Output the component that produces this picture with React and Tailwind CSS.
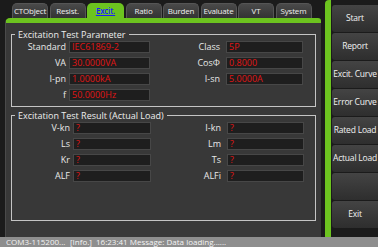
import React from 'react';

const tabs = ['CTObject', 'Resist.', 'Excit.', 'Ratio', 'Burden', 'Evaluate', 'VT', 'System'];
const sideButtons = ['Start', 'Report', 'Excit. Curve', 'Error Curve', 'Rated Load', 'Actual Load', '', 'Exit'];

const paramRows = [
  ['Standard', 'IEC61869-2', 'Class', '5P'],
  ['VA', '30.0000VA', 'CosΦ', '0.8000'],
  ['I-pn', '1.0000kA', 'I-sn', '5.0000A'],
  ['f', '50.0000Hz', null, null],
];

const resultRows = [
  ['V-kn', '?', 'I-kn', '?'],
  ['Ls', '?', 'Lm', '?'],
  ['Kr', '?', 'Ts', '?'],
  ['ALF', '?', 'ALFi', '?'],
];

const Field = ({ value, width }) => (
  <div
    className="h-[12px] bg-[#1e1e1e] border border-[#474747] text-[#e01515] pl-[2px] leading-[10px]"
    style={{ width }}
  >
    {value}
  </div>
);

const GroupBox = ({ title, rows, leftLabel, leftInput, height }) => (
  <fieldset
    className="border border-[#c4c4c4] mx-[5px] px-0 pt-[1px]"
    style={{ height }}
  >
    <legend className="ml-[3px] px-[3px] text-[#eeeeee] leading-[11px]">{title}</legend>
    <div className="flex flex-col gap-[4px]">
      {rows.map(([l1, v1, l2, v2]) => (
        <div key={l1} className="flex items-center h-[12px]">
          <div className="text-right text-[#e8e8e8] pr-[3px]" style={{ width: leftLabel }}>{l1}</div>
          <Field value={v1} width={leftInput} />
          {l2 && (
            <>
              <div className="w-[76px] text-right text-[#e8e8e8] pr-[6px]">{l2}</div>
              <Field value={v2} width={77} />
            </>
          )}
        </div>
      ))}
    </div>
  </fieldset>
);

export default function App() {
  return (
    <div
      className="w-[378px] h-[247px] bg-[#1b1b1b] flex flex-col overflow-hidden text-[9px]"
      style={{ fontFamily: '"Open Sans", "Liberation Sans", sans-serif' }}
    >
      <div className="flex h-[237px]">
        {/* left: tabs + page */}
        <div className="w-[321px] flex flex-col">
          <div className="flex gap-[1.5px] pl-[12px] pt-[3px] h-[18px] text-[8px] tracking-[-0.2px]">
            {tabs.map((t) => (
              <div
                key={t}
                className={
                  t === 'Excit.'
                    ? 'w-[37px] h-[15px] rounded-t-[5px] bg-[#6cc31f] text-[#1a1aff] underline font-semibold flex items-center justify-center whitespace-nowrap'
                    : 'w-[36px] h-[15px] rounded-t-[5px] bg-gradient-to-b from-[#4a4a4a] to-[#333333] border-t border-x border-[#555555] text-[#eeeeee] flex items-center justify-center whitespace-nowrap'
                }
              >
                {t}
              </div>
            ))}
          </div>
          <div className="ml-[5px] flex-1 flex flex-col rounded-tl-[5px] rounded-tr-[3px] border-t-[5px] border-[#6cc31f] bg-[#383838] border-l border-l-[#4a4a4a] pt-[6px]">
            <GroupBox
              title="Excitation Test Parameter"
              rows={paramRows}
              leftLabel={57}
              leftInput={81}
              height={78}
            />
            <div className="h-[3px]" />
            <GroupBox
              title="Excitation Test Result (Actual Load)"
              rows={resultRows}
              leftLabel={61}
              leftInput={78}
              height={111}
            />
          </div>
        </div>

        <div className="w-[4px]" />
        {/* green side stripe */}
        <div className="w-[6px] bg-[#6cc31f] rounded-tl-[4px]" />

        {/* right command buttons */}
        <div className="flex-1 flex flex-col gap-px pt-[5px] bg-[#1b1b1b] text-[8.5px] tracking-[-0.2px]">
          {sideButtons.map((b, i) => (
            <div
              key={i}
              className="h-[27px] ml-px rounded-l-[3px] bg-gradient-to-b from-[#444444] to-[#2e2e2e] text-[#f2f2f2] flex items-center justify-center whitespace-nowrap"
            >
              {b}
            </div>
          ))}
        </div>
      </div>

      {/* status bar */}
      <div className="h-[10px] bg-[#8e8e8e] text-[#f4f4f4] flex items-center text-[8px] leading-[10px] pl-[6px] whitespace-nowrap">
        <span className="w-[64px] shrink-0">COM3-115200...</span>
        <span className="w-[26px] shrink-0">[Info.]</span>
        <span>16:23:41 Message: Data loading......</span>
      </div>
    </div>
  );
}
